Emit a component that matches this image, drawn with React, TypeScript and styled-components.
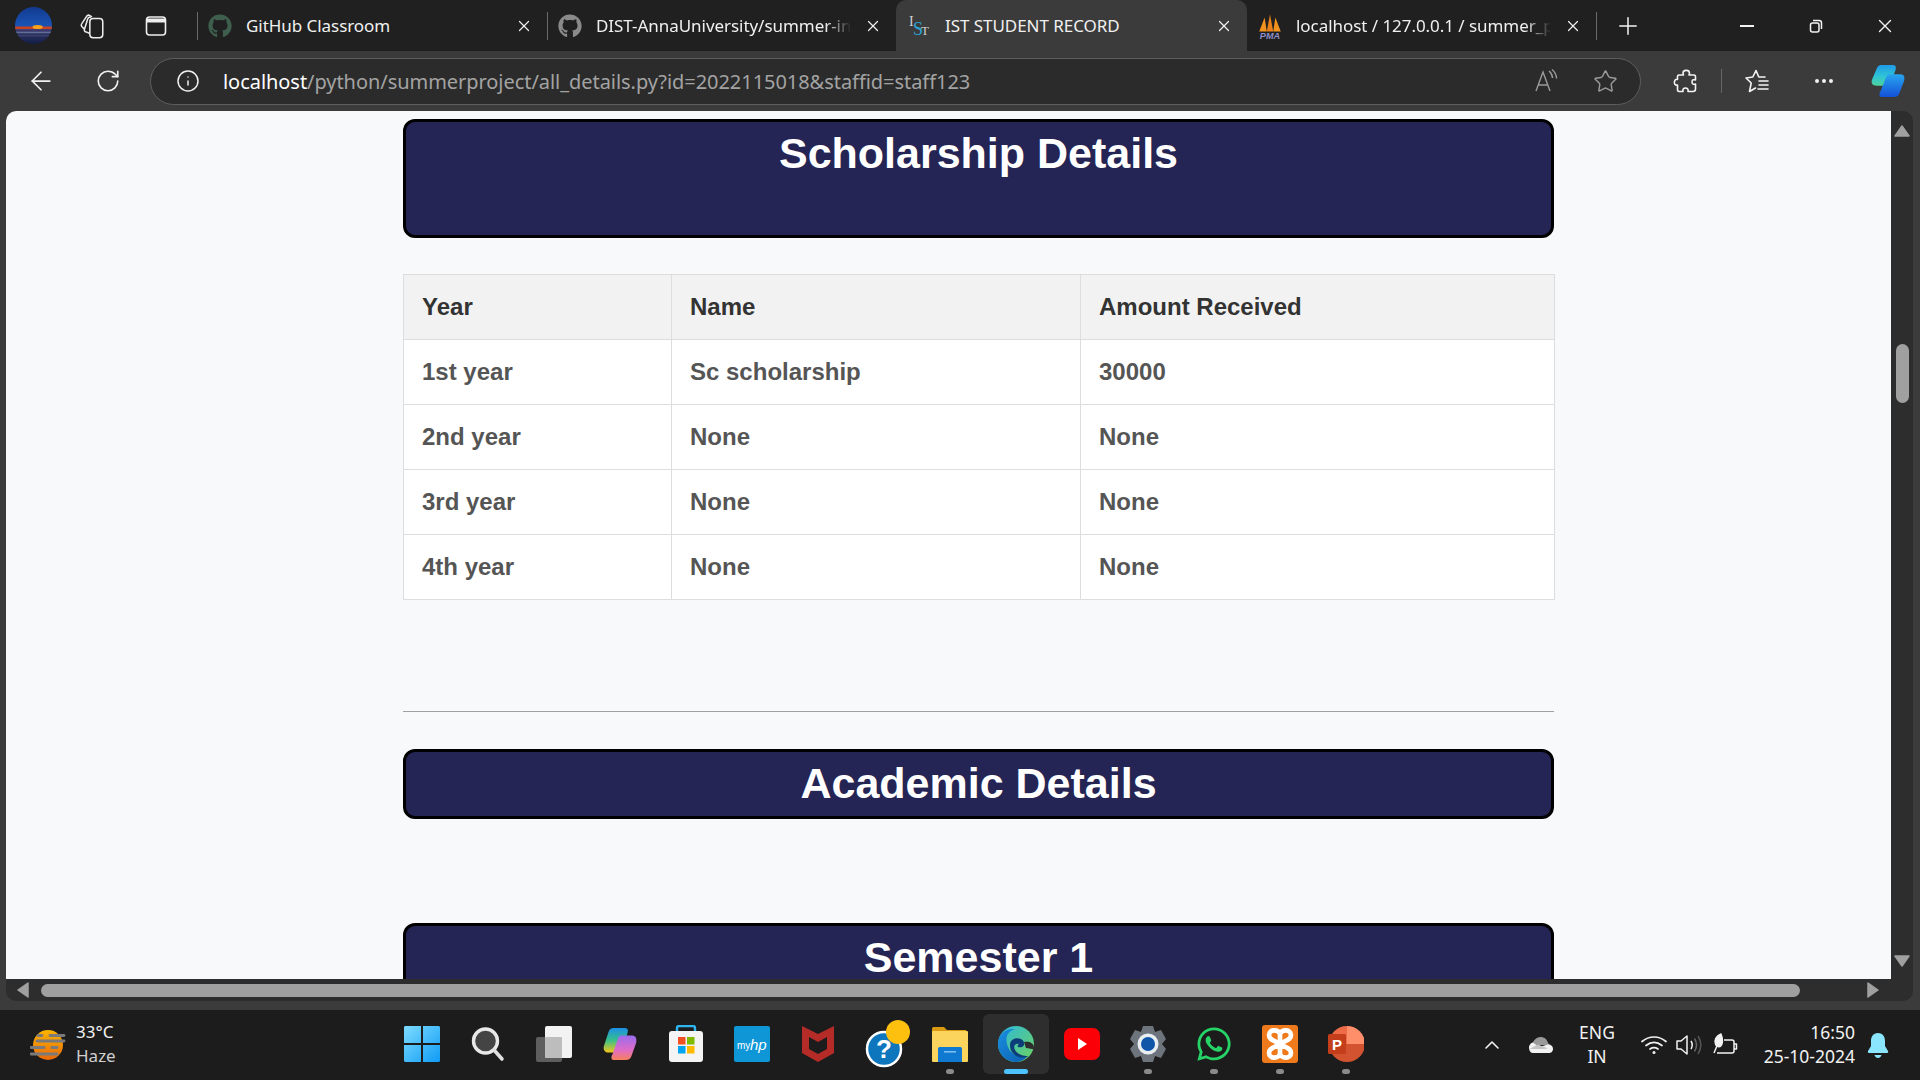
/** Edge window with the student record page, and the Windows taskbar under it. */
import React from 'react';
import styled, { createGlobalStyle } from 'styled-components';
import {
  ArrowLeft,
  ChevronUp,
  Info,
  MoreHorizontal,
  Plus,
  RotateCw,
  Star,
  X,
} from 'lucide-react';
import { FaGithub, FaWhatsapp } from 'react-icons/fa';

const years = [
  ['1st year', 'Sc scholarship', '30000'],
  ['2nd year', 'None', 'None'],
  ['3rd year', 'None', 'None'],
  ['4th year', 'None', 'None'],
];

const GlobalStyle = createGlobalStyle`
  html, body {
    margin: 0;
    height: 100%;
    overflow: hidden;
    background: #1c1c1c;
  }
  * { box-sizing: border-box; }
`;

const Screen = styled.div`
  width: 1920px;
  height: 1080px;
  display: flex;
  flex-direction: column;
  overflow: hidden;
  font-family: 'Noto Sans', sans-serif;
  background: #3b3b3b;
`;

/* ---- tabs ---- */

const TabStrip = styled.div`
  height: 51px;
  flex: none;
  display: flex;
  background: #202020;
  color: #f0f0f0;
`;

const Slot = styled.div<{ $w: number }>`
  width: ${({ $w }) => $w}px;
  flex: none;
  display: flex;
  align-items: center;
  justify-content: center;
  color: #f2f2f2;
`;

const TabGroup = styled.div`
  margin-left: 3px;
  display: flex;
`;

const Tab = styled.div<{ $active?: boolean; $w: number; $line?: boolean }>`
  width: ${({ $w }) => $w}px;
  display: flex;
  align-items: center;
  gap: 13px;
  padding: 0 14px 0 10px;
  position: relative;
  background: ${({ $active }) => ($active ? '#3b3b3b' : 'transparent')};
  border-radius: ${({ $active }) => ($active ? '10px 10px 0 0' : '0')};
  &::before {
    content: '';
    display: ${({ $line }) => ($line ? 'block' : 'none')};
    position: absolute;
    left: 0;
    top: 12px;
    bottom: 11px;
    width: 1px;
    background: #6a6a6a;
  }
`;

const TabIcon = styled.div`
  width: 26px;
  height: 26px;
  flex: none;
  display: flex;
  align-items: center;
  justify-content: center;
`;

const TabTitle = styled.span<{ $fade?: boolean }>`
  flex: 1;
  min-width: 0;
  font-size: 17px;
  letter-spacing: -0.05px;
  white-space: nowrap;
  mask-image: ${({ $fade }) =>
    $fade ? 'linear-gradient(to right, #000 90%, transparent 100%)' : 'none'};
`;

const NewTabSlot = styled(Slot)`
  width: 62px;
  border-left: 1px solid #6a6a6a;
  margin: 12px 0 11px;
`;

const WindowButtons = styled.div`
  margin-left: auto;
  display: flex;
`;

const MinimizeMark = styled.div`
  width: 14px;
  height: 2px;
  background: #f2f2f2;
`;

/* ---- address bar ---- */

const Toolbar = styled.div`
  height: 60px;
  flex: none;
  display: flex;
  align-items: center;
  padding-left: 8px;
  background: #3b3b3b;
`;

const AddressBar = styled.div`
  width: 1491px;
  height: 47px;
  flex: none;
  margin-left: 8px;
  margin-right: 15px;
  display: flex;
  align-items: center;
  padding: 0 5px 0 25px;
  border: 1.5px solid #5e5e5e;
  border-radius: 24px;
  background: #2b2b2b;
`;

const UrlText = styled.div`
  margin-left: 23px;
  flex: 1;
  font-size: 20px;
  letter-spacing: -0.05px;
  color: #a3a3a3;
  white-space: nowrap;
`;

const UrlHost = styled.span`
  color: #fff;
`;

const ToolbarLine = styled.div`
  width: 1px;
  height: 24px;
  flex: none;
  background: #666;
  margin: 0 5px 0 5px;
`;

/* ---- web page ---- */

const WebFrame = styled.div`
  flex: 1;
  min-height: 0;
  margin: 0 7px 9px 6px;
  display: flex;
  flex-direction: column;
  border-radius: 10px;
  overflow: hidden;
  background: #2d2d2d;
`;

const FrameRow = styled.div`
  flex: 1;
  min-height: 0;
  display: flex;
`;

const Page = styled.main`
  flex: 1;
  min-width: 0;
  overflow: hidden;
  background: #f8f9fa;
  border-radius: 8px 0 0 0;
  font-family: 'Liberation Sans', Arial, sans-serif;
  padding-top: 8px;
`;

/* the page is scrolled sideways, so the column is not centred in the view */
const Column = styled.div`
  width: 1151px;
  margin-left: 397px;
`;

const Heading = styled.h2<{ $tall?: boolean }>`
  margin: 0;
  height: ${({ $tall }) => ($tall ? 119 : 70)}px;
  padding-top: 7px;
  border: 3px solid #000;
  border-radius: 12px;
  background: #252555;
  color: #fff;
  text-align: center;
  font-size: 43px;
  line-height: 49px;
  font-weight: 700;
`;

const RecordTable = styled.table`
  width: 1151px;
  margin-top: 36px;
  table-layout: fixed;
  border-collapse: collapse;
  font-size: 24px;
  font-weight: 700;
`;

const HeadCell = styled.th<{ $w: number }>`
  width: ${({ $w }) => $w}px;
  height: 65px;
  padding: 0 18px;
  text-align: left;
  border: 1px solid #ddd;
  background: #f2f2f2;
  color: #333;
  font-weight: 700;
`;

const Cell = styled.td`
  height: 65px;
  padding: 0 18px;
  border: 1px solid #ddd;
  background: #fff;
  color: #555;
`;

const Rule = styled.hr`
  margin: 111px 0 37px;
  border: none;
  border-top: 1px solid #a0a0a0;
`;

const Semester = styled(Heading)`
  margin-top: 104px;
`;

/* ---- scrollbars ---- */

const VScroll = styled.div`
  width: 22px;
  flex: none;
  display: flex;
  flex-direction: column;
  align-items: center;
  padding: 12px 0 10px;
`;

const VThumb = styled.div`
  width: 13px;
  height: 59px;
  margin: 205px 0 auto;
  border-radius: 7px;
  background: #a0a0a0;
`;

const HScroll = styled.div`
  height: 22px;
  flex: none;
  display: flex;
  align-items: center;
  padding-left: 9px;
`;

const HThumb = styled.div`
  width: 1759px;
  height: 13px;
  margin: 0 65px 0 10px;
  border-radius: 7px;
  background: #a0a0a0;
`;

/* ---- taskbar ---- */

const Taskbar = styled.footer`
  height: 70px;
  flex: none;
  display: flex;
  align-items: center;
  background: #1c1c1c;
  color: #f2f2f2;
`;

const Weather = styled.div`
  width: 389px;
  flex: none;
  display: flex;
  align-items: center;
  gap: 10px;
  padding-left: 30px;
`;

const WeatherText = styled.div`
  font-size: 17px;
  line-height: 24px;
  margin-top: -2px;
`;

const WeatherSub = styled.div`
  color: #cfcfcf;
`;

const Apps = styled.div`
  display: flex;
  height: 70px;
  align-items: center;
`;

const AppTile = styled.div<{ $active?: boolean }>`
  width: 66px;
  height: 60px;
  margin-top: -3px;
  flex: none;
  position: relative;
  display: flex;
  align-items: center;
  justify-content: center;
  border-radius: 6px;
  background: ${({ $active }) => ($active ? '#2e2e2e' : 'transparent')};
`;

const RunningDot = styled.span<{ $active?: boolean }>`
  position: absolute;
  bottom: 0;
  left: 50%;
  transform: translateX(-50%);
  width: ${({ $active }) => ($active ? 24 : 8)}px;
  height: 5px;
  border-radius: 3px;
  background: ${({ $active }) => ($active ? '#4cc2ff' : '#8a8a8a')};
`;

const Tray = styled.div`
  margin-left: auto;
  display: flex;
  align-items: center;
  height: 100%;
  padding-right: 19px;
`;

const TrayIcon = styled.div<{ $w: number }>`
  width: ${({ $w }) => $w}px;
  flex: none;
  display: flex;
  align-items: center;
  justify-content: center;
`;

const TrayText = styled.div<{ $align: string; $w: number }>`
  width: ${({ $w }) => $w}px;
  flex: none;
  text-align: ${({ $align }) => $align};
  font-size: 17.5px;
  line-height: 24px;
  margin-top: -2px;
  white-space: nowrap;
`;

const Triangle = ({ points, size = 16 }: { points: string; size?: number }) => (
  <svg width={size} height={size} viewBox="0 0 16 16">
    <polygon points={points} fill="#a0a0a0" stroke="#a0a0a0" strokeWidth="1.5" strokeLinejoin="round" />
  </svg>
);

const ProfileIcon = () => (
  <svg width="37" height="37" viewBox="0 0 36 36">
    <defs>
      <clipPath id="pf">
        <circle cx="18" cy="18" r="18" />
      </clipPath>
      <linearGradient id="sky" x1="0" y1="0" x2="0" y2="1">
        <stop offset="0" stopColor="#123a8f" />
        <stop offset="0.55" stopColor="#1a56b8" />
        <stop offset="0.62" stopColor="#3f3a6e" />
        <stop offset="1" stopColor="#0e1d45" />
      </linearGradient>
    </defs>
    <g clipPath="url(#pf)">
      <rect width="36" height="36" fill="url(#sky)" />
      <rect y="19" width="36" height="2.5" fill="#c9431e" />
      <ellipse cx="22" cy="19.5" rx="5" ry="2" fill="#f6a11c" />
      <rect y="24" width="36" height="1.5" fill="#5f6f96" />
      <rect y="27.5" width="36" height="1" fill="#3d4b73" />
    </g>
  </svg>
);

const CollectionsIcon = () => (
  <svg width="28" height="28" viewBox="0 0 26 26" fill="none" stroke="#eee" strokeWidth="1.4">
    <rect x="11" y="6" width="12" height="18" rx="3" />
    <path d="M11 20 L7.5 18.5 C6 18 5.6 17 6 16 L9 6.5 C9.5 5 10.5 4.5 12 5" />
    <path d="M6 16 L3.5 13.5 C2.8 12.6 2.8 11.8 3.4 11 L8 4 C8.8 2.9 10 2.7 11 3.3 L13 4.5" />
  </svg>
);

const VerticalTabsIcon = () => (
  <svg width="24" height="24" viewBox="0 0 24 24" fill="none" stroke="#eee" strokeWidth="1.6">
    <rect x="2.5" y="3" width="19" height="18" rx="3" />
    <path d="M3 4.5 H21 V8.5 H3 Z" fill="#eee" stroke="none" />
  </svg>
);

const IstIcon = () => (
  <svg width="24" height="24" viewBox="0 0 24 24" fontFamily="Liberation Serif, serif">
    <text x="2" y="12" fill="#cfcfcf" fontSize="14">I</text>
    <text x="6" y="21" fill="#2aa6d8" fontSize="18">S</text>
    <text x="14" y="21" fill="#cfcfcf" fontSize="13">T</text>
  </svg>
);

const PmaIcon = () => (
  <svg width="26" height="28" viewBox="0 0 24 26">
    <polygon points="2,18 7,5 9,18" fill="#f2921e" />
    <polygon points="9,18 12,2 15,18" fill="#e9801a" />
    <polygon points="15,18 17,5 22,18" fill="#f2921e" />
    <text x="12" y="25" fontSize="8.5" fontWeight="700" fontStyle="italic" fontFamily="Liberation Sans, sans-serif" fill="#8d8dc9" textAnchor="middle">PMA</text>
  </svg>
);

const RestoreIcon = () => (
  <svg width="18" height="18" viewBox="0 0 18 18" fill="none" stroke="#f2f2f2" strokeWidth="1.5">
    <rect x="3.5" y="6" width="8.5" height="9" rx="2" />
    <path d="M6 3.5 H12 C13.6 3.5 14.5 4.4 14.5 6 V12" />
  </svg>
);

const ReadAloudIcon = () => (
  <svg width="26" height="26" viewBox="0 0 26 26" fill="none" stroke="#9a9a9a" strokeWidth="1.4">
    <path d="M3 23 L10 4 L17 23 M5.4 17 H14.6" />
    <path d="M16 3 C18.4 5 19.4 7.2 19.6 10 M19 1.5 C22 4 23.4 7 23.6 10.5" />
  </svg>
);

const PuzzleIcon = () => (
  <svg width="26" height="26" viewBox="0 0 26 26" fill="none" stroke="#f4f4f4" strokeWidth="1.6" strokeLinejoin="round">
    <path d="M10 5 C10 2 16 1 16.5 5 C16.5 6 16 6.5 16 7 H21 C22 7 22.5 8 22.5 9 V12 C21 11.4 19 11.5 19 14 C19 16.5 21 16.6 22.5 16 V21 C22.5 22.5 21.5 23.5 20 23.5 H15 C15.6 21.5 14.5 20 12.5 20 C10.5 20 9.4 21.5 10 23.5 H6 C5 23.5 4.5 22.5 4.5 21.5 V17 C2 17.5 1 15.5 1.5 13.5 C2 11.5 3.5 11 4.5 11.5 V9 C4.5 8 5 7 6 7 H10.5 C10.5 6.5 10 6 10 5 Z" />
  </svg>
);

const FavoritesIcon = () => (
  <svg width="28" height="26" viewBox="0 0 28 26" fill="none" stroke="#f4f4f4" strokeWidth="1.6" strokeLinejoin="round" strokeLinecap="round">
    <path d="M12 2.5 L14.8 9 H21 M2 10 L8.8 9 L12 2.5 M2 10 L7.2 15 L5.5 23.5 L11.5 20" />
    <path d="M15 13 H24 M15 17 H24 M14 21 H24" />
  </svg>
);

const CopilotIcon = () => (
  <svg width="36" height="36" viewBox="0 0 38 38">
    <defs>
      <linearGradient id="cpa" x1="0" y1="0" x2="0" y2="1">
        <stop offset="0" stopColor="#1f9be8" />
        <stop offset="0.55" stopColor="#2ec4d6" />
        <stop offset="1" stopColor="#4fd39a" />
      </linearGradient>
      <linearGradient id="cpb" x1="0" y1="0" x2="0" y2="1">
        <stop offset="0" stopColor="#27a5ef" />
        <stop offset="1" stopColor="#1550d8" />
      </linearGradient>
    </defs>
    <path d="M12 2 H24 C27 2 28 4 27 7 L21 24 H7 C3 24 1 22 2 18 L7 6 C8 3 10 2 12 2 Z" fill="url(#cpa)" />
    <path d="M20 12 H32 C36 12 37 15 36 19 L31 32 C30 35 28 36 25 36 H13 C10 36 9 33 11 30 L17 15 C18 13 19 12 20 12 Z" fill="url(#cpb)" />
  </svg>
);

const WeatherIcon = () => (
  <svg width="36" height="32" viewBox="0 0 36 32">
    <defs>
      <linearGradient id="sun" x1="0" y1="0" x2="0" y2="1">
        <stop offset="0" stopColor="#fbb400" />
        <stop offset="1" stopColor="#e8690c" />
      </linearGradient>
    </defs>
    <circle cx="18" cy="16" r="15" fill="url(#sun)" />
    <g fill="none" stroke="#7a7a7a" strokeWidth="2.8" strokeLinecap="round">
      <path d="M8 6.5 H12 M20 6.5 H34" />
      <path d="M7 12 H34" />
      <path d="M1 18.5 H14 M22 18.5 H27" />
      <path d="M1 25 H27" />
    </g>
  </svg>
);

const WindowsIcon = () => (
  <svg width="36" height="36" viewBox="0 0 36 36">
    <defs>
      <linearGradient id="win" x1="0" y1="0" x2="1" y2="1">
        <stop offset="0" stopColor="#7ddcff" />
        <stop offset="1" stopColor="#0f9bf5" />
      </linearGradient>
    </defs>
    <path d="M1 0 H17 V17 H0 V1 Z M19 0 H35 L36 1 V17 H19 Z M0 19 H17 V36 H1 L0 35 Z M19 19 H36 V35 L35 36 H19 Z" fill="url(#win)" />
  </svg>
);

const SearchIcon = () => (
  <svg width="34" height="36" viewBox="0 0 34 36">
    <circle cx="14.5" cy="15" r="12" fill="#444" stroke="#e8e8e8" strokeWidth="3.4" />
    <path d="M23 24 L31 33" stroke="#e0e0e0" strokeWidth="3.6" strokeLinecap="round" />
  </svg>
);

const TaskViewIcon = () => (
  <svg width="36" height="36" viewBox="0 0 36 36">
    <rect x="0" y="11" width="26" height="25" rx="2" fill="#5e5e5e" />
    <rect x="9" y="0" width="27" height="32" rx="2" fill="#f2f2f2" />
    <rect x="9" y="11" width="17" height="21" rx="1" fill="#bdbdbd" />
  </svg>
);

const CopilotColor = () => (
  <svg width="36" height="36" viewBox="0 0 38 38">
    <defs>
      <linearGradient id="cca" x1="0" y1="0" x2="0" y2="1">
        <stop offset="0" stopColor="#1c8fe8" />
        <stop offset="0.5" stopColor="#37c08a" />
        <stop offset="1" stopColor="#f5c518" />
      </linearGradient>
      <linearGradient id="ccb" x1="0" y1="0" x2="0" y2="1">
        <stop offset="0" stopColor="#9a6cf0" />
        <stop offset="0.6" stopColor="#e06cc4" />
        <stop offset="1" stopColor="#f7825a" />
      </linearGradient>
    </defs>
    <path d="M12 2 H24 C27 2 28 4 27 7 L21 28 H7 C3 28 1 25 2 21 L7 6 C8 3 10 2 12 2 Z" fill="url(#cca)" />
    <path d="M20 10 H32 C36 10 37 14 36 18 L31 32 C30 35 28 36 25 36 H13 C10 36 9 33 11 30 L17 13 C18 11 19 10 20 10 Z" fill="url(#ccb)" />
  </svg>
);

const StoreIcon = () => (
  <svg width="36" height="38" viewBox="0 0 36 38">
    <path d="M9 7 V3 C9 1.5 10 1 11 1 H25 C26 1 27 1.5 27 3 V7" fill="none" stroke="#2cb5ee" strokeWidth="2.4" />
    <rect x="1" y="6" width="34" height="31" rx="3" fill="#f4f4f4" />
    <rect x="10" y="12" width="7.5" height="7.5" fill="#f25022" />
    <rect x="19" y="12" width="7.5" height="7.5" fill="#7fba00" />
    <rect x="10" y="21" width="7.5" height="7.5" fill="#00a4ef" />
    <rect x="19" y="21" width="7.5" height="7.5" fill="#ffb900" />
  </svg>
);

const MyHpIcon = () => (
  <svg width="36" height="36" viewBox="0 0 36 36">
    <rect width="36" height="36" rx="2" fill="#0f96d6" />
    <text x="3" y="23" fontSize="10" fontFamily="Liberation Sans, sans-serif" fill="#fff">my</text>
    <text x="16" y="24" fontSize="15" fontStyle="italic" fontFamily="Liberation Sans, sans-serif" fill="#fff">hp</text>
  </svg>
);

const McAfeeIcon = () => (
  <svg width="32" height="36" viewBox="0 0 32 36">
    <path d="M0 0 L16 8 L32 0 V27 L16 36 L0 27 Z M7 11 V23 L16 28 L25 23 V11 L16 16 Z" fill="#b52b27" fillRule="evenodd" />
  </svg>
);

const HelpIcon = () => (
  <svg width="54" height="48" viewBox="0 0 54 48">
    <circle cx="27" cy="29" r="17" fill="#0e76bc" stroke="#fff" strokeWidth="2.5" />
    <text x="27" y="38" fontSize="26" fontWeight="700" fontFamily="Liberation Sans, sans-serif" fill="#fff" textAnchor="middle">?</text>
    <circle cx="41" cy="12" r="12" fill="#fdc00f" />
  </svg>
);

const FolderIcon = () => (
  <svg width="36" height="36" viewBox="0 0 36 36">
    <path d="M0 3 C0 1.5 1 1 2 1 H12 L15 4 H34 V10 H0 Z" fill="#d99a12" />
    <rect x="0" y="5" width="36" height="31" rx="1" fill="#fbd45e" />
    <path d="M6 36 V23 C6 21.5 7 21 8 21 H28 C29 21 30 21.5 30 23 V36 Z" fill="#0f79d1" />
    <rect x="12" y="25" width="12" height="1.6" fill="#7bbdf0" />
  </svg>
);

const EdgeIcon = () => (
  <svg width="36" height="36" viewBox="0 0 36 36">
    <defs>
      <linearGradient id="eg" x1="0" y1="0" x2="1" y2="1">
        <stop offset="0" stopColor="#2bb8de" />
        <stop offset="1" stopColor="#6fd35e" />
      </linearGradient>
      <linearGradient id="ebl" x1="0" y1="0" x2="1" y2="1">
        <stop offset="0" stopColor="#1a8fe0" />
        <stop offset="1" stopColor="#0c5eb0" />
      </linearGradient>
    </defs>
    <circle cx="18" cy="18" r="18" fill="url(#eg)" />
    <path d="M0 18 C0 8 8 2 17 3 C10 5 7 11 9 18 C11 27 20 33 30 30 C26 34 22 36 18 36 C8 36 0 28 0 18 Z" fill="url(#ebl)" />
    <path d="M12 19 C12 13 18 11 23 13 C27 15 27 20 24 21 C20 22 18 20 21 18 C17 17 15 20 17 24 C19 28 25 30 30 30 C24 34 12 30 12 19 Z" fill="#0c3d78" />
    <path d="M36 22 C36 25 33 22 28 22 L26 16 C30 15 36 16 36 22 Z" fill="#2e2e2e" />
  </svg>
);

const YoutubeIcon = () => (
  <svg width="36" height="32" viewBox="0 0 36 32">
    <rect width="36" height="32" rx="7" fill="#fb0007" />
    <polygon points="14,10 23,16 14,22" fill="#fff" />
  </svg>
);

const GearIcon = () => (
  <svg width="36" height="38" viewBox="0 0 36 38">
    <path d="M13 1 H23 L25 7 L31 5 L36 14 L32 19 L36 24 L31 33 L25 31 L23 37 H13 L11 31 L5 33 L0 24 L4 19 L0 14 L5 5 L11 7 Z" fill="#6d747c" />
    <circle cx="18" cy="19" r="10.5" fill="#e8eef2" />
    <circle cx="18" cy="19" r="7" fill="#0f56a8" />
  </svg>
);

const XamppIcon = () => (
  <svg width="36" height="38" viewBox="0 0 36 38">
    <rect width="36" height="38" rx="3" fill="#ef7a1c" />
    <g fill="none" stroke="#fff" strokeWidth="4.6">
      <path d="M18 9 C16 4 7 4 7 10 C7 15 12 15 18 19 C24 15 29 15 29 10 C29 4 20 4 18 9 V29 C16 34 7 34 7 28 C7 23 12 23 18 19 C24 23 29 23 29 28 C29 34 20 34 18 29" />
    </g>
  </svg>
);

const PowerPointIcon = () => (
  <svg width="36" height="36" viewBox="0 0 36 36">
    <path d="M19 0 A18 18 0 0 1 37 18 H19 Z" fill="#ff8f6b" />
    <path d="M19 0 A18 18 0 0 0 1 18 H19 Z" fill="#ed6c47" />
    <path d="M1 18 A18 18 0 0 0 37 18 Z" fill="#d35230" />
    <rect x="0" y="8" width="18" height="20" rx="1.5" fill="#c43e1c" />
    <text x="9" y="24" fontSize="15" fontWeight="700" fontFamily="Liberation Sans, sans-serif" fill="#fff" textAnchor="middle">P</text>
  </svg>
);

const OneDriveIcon = () => (
  <svg width="24" height="16" viewBox="0 0 24 16">
    <path d="M3 8 C4 3 8 0 11.5 0 C15 0 18 2 19 6 L21 8 Z" fill="#9a9a9a" />
    <path d="M4 5.5 C1 6 0 9 0 11 C0 14 2 16 4 16 H20 C23 16 24 13.5 24 12 C24 9 22 7.5 19 7.5 L10 10 Z" fill="#f2f2f2" />
    <path d="M0.5 12 L9 7.5 L19 11.5 L14 12 Z" fill="#c4c4c4" />
  </svg>
);

const WifiIcon = () => (
  <svg width="26" height="20" viewBox="0 0 26 20" fill="none" stroke="#f2f2f2" strokeWidth="1.7" strokeLinecap="round">
    <path d="M1 6.5 C8 0.5 18 0.5 25 6.5" />
    <path d="M5 10.5 C10 6.5 16 6.5 21 10.5" />
    <path d="M9 14 C11.5 12.4 14.5 12.4 17 14" />
    <circle cx="13" cy="17.5" r="1.5" fill="#f2f2f2" stroke="none" />
  </svg>
);

const SpeakerIcon = () => (
  <svg width="26" height="22" viewBox="0 0 26 22" fill="none" strokeWidth="1.5">
    <path d="M1 7 H5 L11 2 V20 L5 15 H1 Z" stroke="#f2f2f2" strokeLinejoin="round" />
    <path d="M15 7 C16.5 9.5 16.5 12.5 15 15" stroke="#f2f2f2" />
    <path d="M18.5 4.5 C21 8.5 21 13.5 18.5 17.5" stroke="#666" />
    <path d="M22 2 C25.5 7.5 25.5 14.5 22 20" stroke="#555" />
  </svg>
);

const BatteryIcon = () => (
  <svg width="26" height="24" viewBox="0 0 26 24" fill="none" stroke="#f2f2f2" strokeWidth="1.5" strokeLinejoin="round">
    <path d="M12 7 H20 C21.5 7 22 8 22 9 V18 C22 19 21.5 20 20 20 H5" />
    <path d="M22 11 H24.5 V16 H22" />
    <path d="M9 1 C4 3 2 7 3.5 11 C4 13 6 14 8 13.5 C11 12 11 6 9 1 Z M2 20 L7 8" fill="#f2f2f2" />
  </svg>
);

const BellIcon = () => (
  <svg width="22" height="26" viewBox="0 0 22 26">
    <path d="M11 1 C6 1 4 5 4 9 V14 L1 19 C0.5 20 1 21 2 21 H20 C21 21 21.5 20 21 19 L18 14 V9 C18 5 16 1 11 1 Z" fill="#8ae6ff" />
    <path d="M7.5 23 H14.5 C14 25 12.5 26 11 26 C9.5 26 8 25 7.5 23 Z" fill="#8ae6ff" />
  </svg>
);

const appIcons: { node: React.ReactNode; dot?: boolean; active?: boolean }[] = [
  { node: <WindowsIcon /> },
  { node: <SearchIcon /> },
  { node: <TaskViewIcon /> },
  { node: <CopilotColor /> },
  { node: <StoreIcon /> },
  { node: <MyHpIcon /> },
  { node: <McAfeeIcon /> },
  { node: <HelpIcon /> },
  { node: <FolderIcon />, dot: true },
  { node: <EdgeIcon />, dot: true, active: true },
  { node: <YoutubeIcon /> },
  { node: <GearIcon />, dot: true },
  { node: <FaWhatsapp size={38} color="#25d366" />, dot: true },
  { node: <XamppIcon />, dot: true },
  { node: <PowerPointIcon />, dot: true },
];

export default function App() {
  return (
    <Screen>
      <GlobalStyle />
      <TabStrip>
        <Slot $w={66}>
          <ProfileIcon />
        </Slot>
        <Slot $w={52}>
          <CollectionsIcon />
        </Slot>
        <Slot $w={76}>
          <VerticalTabsIcon />
        </Slot>
        <TabGroup>
          <Tab $w={350} $line>
            <TabIcon>
              <FaGithub size={24} color="#3f5f4e" />
            </TabIcon>
            <TabTitle>GitHub Classroom</TabTitle>
            <X size={18} strokeWidth={1.6} />
          </Tab>
          <Tab $w={349} $line>
            <TabIcon>
              <FaGithub size={24} color="#8a8a8a" />
            </TabIcon>
            <TabTitle $fade>DIST-AnnaUniversity/summer-in</TabTitle>
            <X size={18} strokeWidth={1.6} />
          </Tab>
          <Tab $w={351} $active>
            <TabIcon>
              <IstIcon />
            </TabIcon>
            <TabTitle>IST STUDENT RECORD</TabTitle>
            <X size={18} strokeWidth={1.6} />
          </Tab>
          <Tab $w={349}>
            <TabIcon>
              <PmaIcon />
            </TabIcon>
            <TabTitle $fade>localhost / 127.0.0.1 / summer_p</TabTitle>
            <X size={18} strokeWidth={1.6} />
          </Tab>
        </TabGroup>
        <NewTabSlot $w={62}>
          <Plus size={28} strokeWidth={1.3} />
        </NewTabSlot>
        <WindowButtons>
          <Slot $w={69}>
            <MinimizeMark />
          </Slot>
          <Slot $w={69}>
            <RestoreIcon />
          </Slot>
          <Slot $w={70}>
            <X size={22} strokeWidth={1.5} />
          </Slot>
        </WindowButtons>
      </TabStrip>

      <Toolbar>
        <Slot $w={66}>
          <ArrowLeft size={30} strokeWidth={1.4} />
        </Slot>
        <Slot $w={68}>
          <RotateCw size={26} strokeWidth={1.5} />
        </Slot>
        <AddressBar>
          <Info size={24} strokeWidth={1.5} color="#f0f0f0" />
          <UrlText>
            <UrlHost>localhost</UrlHost>/python/summerproject/all_details.py?id=2022115018&amp;staffid=staff123
          </UrlText>
          <Slot $w={58}>
            <ReadAloudIcon />
          </Slot>
          <Slot $w={60}>
            <Star size={25} strokeWidth={1.4} color="#9a9a9a" />
          </Slot>
        </AddressBar>
        <Slot $w={60}>
          <PuzzleIcon />
        </Slot>
        <ToolbarLine />
        <Slot $w={62}>
          <FavoritesIcon />
        </Slot>
        <Slot $w={70}>
          <MoreHorizontal size={24} strokeWidth={2} />
        </Slot>
        <Slot $w={58}>
          <CopilotIcon />
        </Slot>
      </Toolbar>

      <WebFrame>
        <FrameRow>
          <Page>
            <Column>
              <Heading $tall>Scholarship Details</Heading>
              <RecordTable>
                <thead>
                  <tr>
                    <HeadCell $w={268}>Year</HeadCell>
                    <HeadCell $w={409}>Name</HeadCell>
                    <HeadCell $w={474}>Amount Received</HeadCell>
                  </tr>
                </thead>
                <tbody>
                  {years.map((row) => (
                    <tr key={row[0]}>
                      {row.map((value, i) => (
                        <Cell key={i}>{value}</Cell>
                      ))}
                    </tr>
                  ))}
                </tbody>
              </RecordTable>
              <Rule />
              <Heading>Academic Details</Heading>
              <Semester>Semester 1</Semester>
            </Column>
          </Page>
          <VScroll>
            <Triangle points="8,3 15,13 1,13" />
            <VThumb />
            <Triangle points="1,3 15,3 8,13" />
          </VScroll>
        </FrameRow>
        <HScroll>
          <Triangle points="13,1 13,15 3,8" />
          <HThumb />
          <Triangle points="3,1 13,8 3,15" />
        </HScroll>
      </WebFrame>

      <Taskbar>
        <Weather>
          <WeatherIcon />
          <WeatherText>
            33°C
            <WeatherSub>Haze</WeatherSub>
          </WeatherText>
        </Weather>
        <Apps>
          {appIcons.map((app, i) => (
            <AppTile key={i} $active={app.active}>
              {app.node}
              {app.dot && <RunningDot $active={app.active} />}
            </AppTile>
          ))}
        </Apps>
        <Tray>
          <TrayIcon $w={64}>
            <ChevronUp size={24} strokeWidth={1.6} />
          </TrayIcon>
          <TrayIcon $w={34}>
            <OneDriveIcon />
          </TrayIcon>
          <TrayText $align="center" $w={78}>
            ENG
            <br />
            IN
          </TrayText>
          <TrayIcon $w={36}>
            <WifiIcon />
          </TrayIcon>
          <TrayIcon $w={34}>
            <SpeakerIcon />
          </TrayIcon>
          <TrayIcon $w={38}>
            <BatteryIcon />
          </TrayIcon>
          <TrayText $align="right" $w={111}>
            16:50
            <br />
            25-10-2024
          </TrayText>
          <TrayIcon $w={46}>
            <BellIcon />
          </TrayIcon>
        </Tray>
      </Taskbar>
    </Screen>
  );
}
